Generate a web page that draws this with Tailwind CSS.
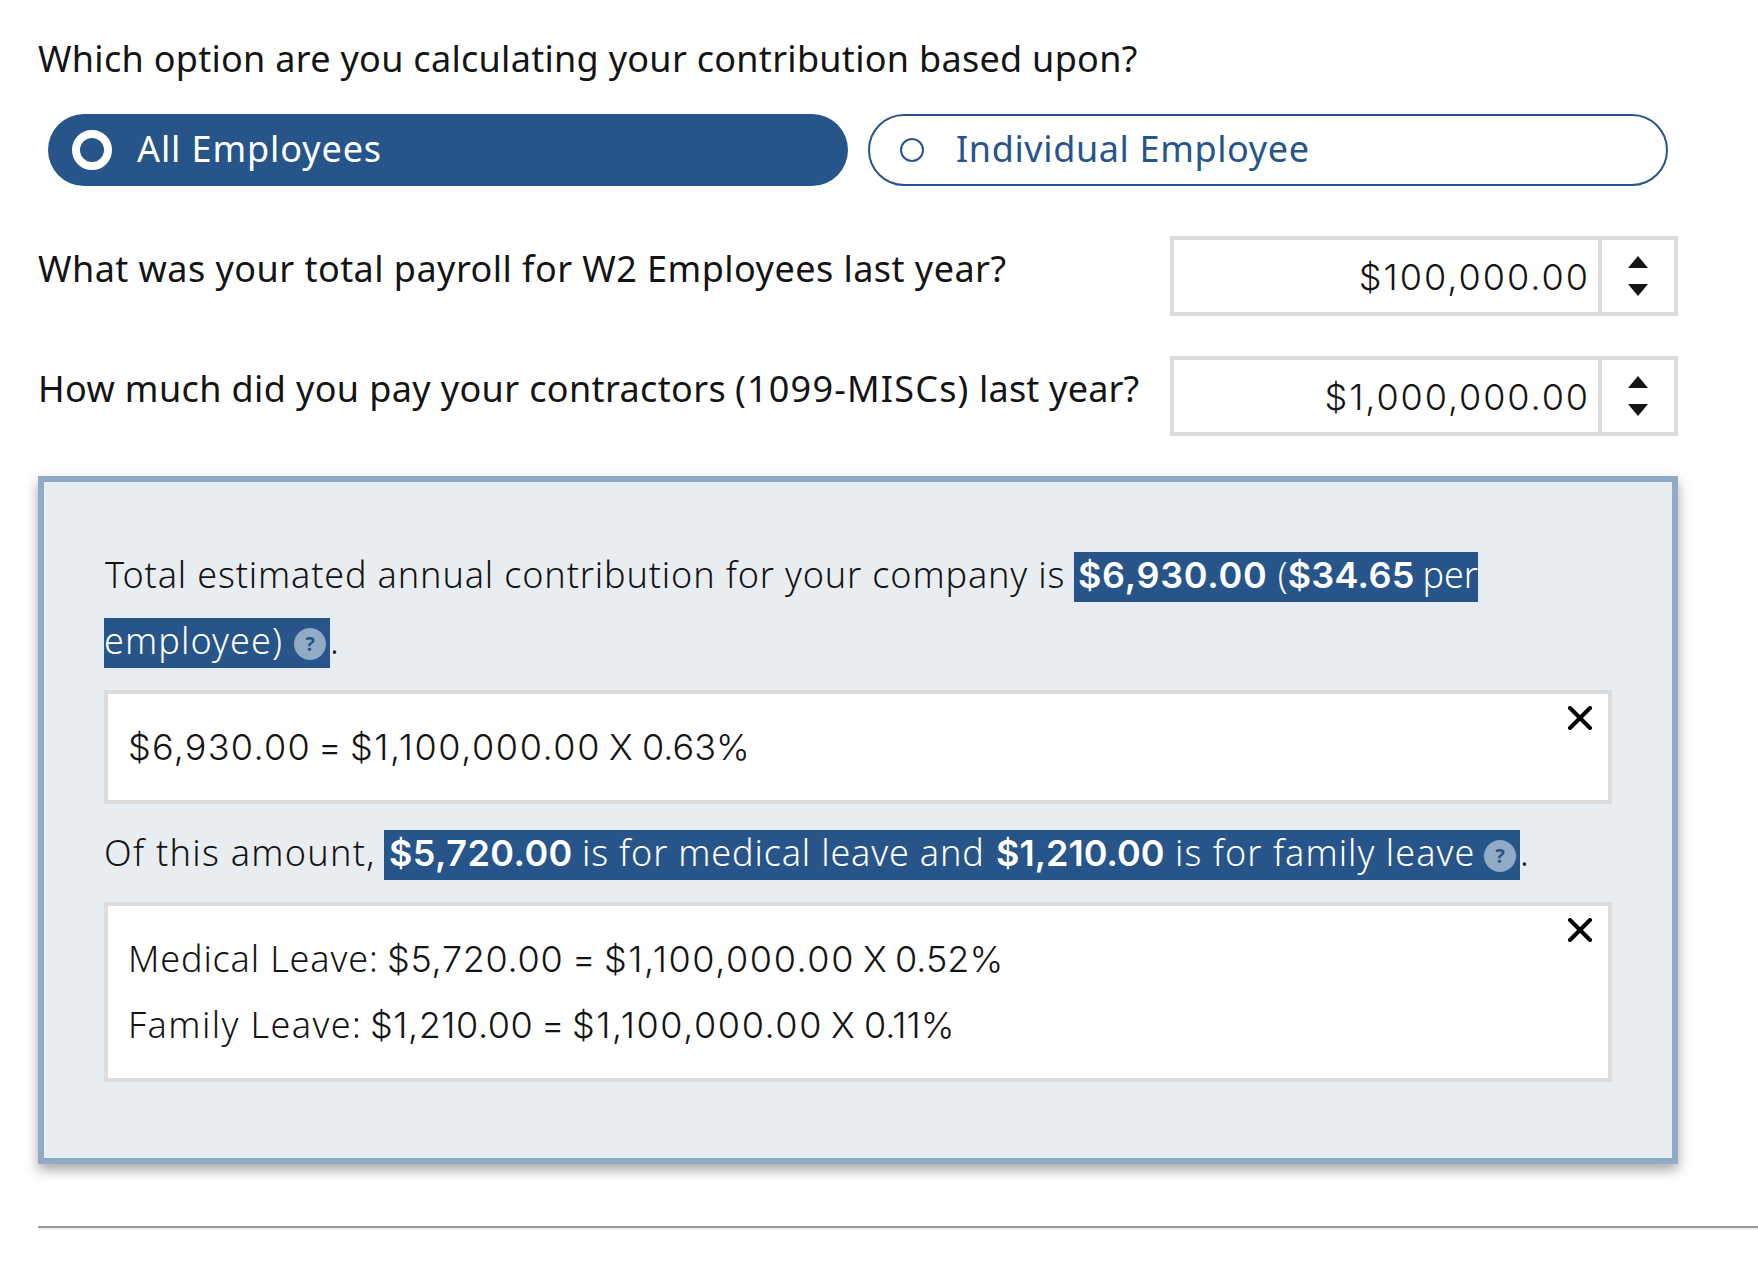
<!DOCTYPE html>
<html lang="en"><head><meta charset="utf-8"><title>Contribution calculator</title><script src="https://cdn.jsdelivr.net/npm/@tailwindcss/browser@4"></script></head>
<body class="bg-white text-[#141414] font-['Noto_Sans',sans-serif] text-[36px] leading-[46px] whitespace-nowrap overflow-hidden">
<main class="pl-[38px] pt-9">
<h1 class="h-[78px] font-normal tracking-[0.29px]">Which option are you calculating your contribution based upon?</h1>
<div class="flex gap-5 pl-[10px]">
<label class="flex w-[800px] h-[72px] items-start rounded-full bg-[#27558A] text-white pl-6 pt-3"><span class="size-10 mt-1 rounded-full border-8 border-white"></span><span class="ml-[25px] tracking-[0.9px]">All Employees</span></label>
<label class="flex w-[800px] h-[72px] items-start rounded-full border-2 border-[#27558A] text-[#27558A] pl-[30px] pt-[10px]"><span class="size-6 mt-3 rounded-full border-2 border-[#27558A]"></span><span class="ml-8 tracking-[0.62px]">Individual Employee</span></label>
</div>
<div class="mt-[50px] flex w-[1640px] justify-between h-20"><div class="pt-[10px] tracking-[0.46px]">What was your total payroll for W2 Employees last year?</div>
<div class="flex w-[508px] border-4 border-[#DCDCDC]"><div class="flex-1 border-r-4 border-[#DCDCDC] pr-2 pt-[14px] text-right font-['Inter'] font-light tracking-[2px]">$100,000.00</div>
<div class="flex w-[72px] flex-col items-center gap-4 pt-4"><svg width="20" height="12" fill="#141414"><path d="M10 0 20 12H0z"/></svg><svg width="20" height="12" fill="#141414"><path d="M0 0H20L10 12z"/></svg></div></div></div>
<div class="mt-10 flex w-[1640px] justify-between h-20"><div class="pt-[10px] flex"><span class="w-[697px] tracking-[0.37px]">How much did you pay your contractors</span><span class="w-[244px] tracking-[1.2px]">(1099-MISCs)</span><span class="tracking-[0.2px]">last year?</span></div>
<div class="flex w-[508px] border-4 border-[#DCDCDC]"><div class="flex-1 border-r-4 border-[#DCDCDC] pr-2 pt-[14px] text-right font-['Inter'] font-light tracking-[1.9px]">$1,000,000.00</div>
<div class="flex w-[72px] flex-col items-center gap-4 pt-4"><svg width="20" height="12" fill="#141414"><path d="M10 0 20 12H0z"/></svg><svg width="20" height="12" fill="#141414"><path d="M0 0H20L10 12z"/></svg></div></div></div>
<section class="mt-10 w-[1640px] h-[688px] border-6 border-[#91AAC6] bg-[#E8EDF1] px-[60px] pt-[70px] shadow-[0_6px_12px_rgba(0,0,0,0.35)] font-light">
<div class="flex h-[50px]"><span class="w-[970px] pl-px tracking-[0.85px]">Total estimated annual contribution for your company is</span>
<div class="flex items-baseline w-[404px] bg-[#27558A] text-white"><span class="ml-1 font-['Inter'] font-semibold w-[200px] tracking-[0.7px]">$6,930.00</span><span class="w-[10px]">(</span><span class="font-['Inter'] font-semibold w-[135px] tracking-[0.3px]">$34.65</span><span>per</span></div></div>
<div class="mt-4 flex h-[50px]"><div class="flex w-[226px] bg-[#27558A] text-white"><span class="w-[190px] tracking-[1.1px]">employee)</span><span class="mt-[10px] flex size-8 items-center justify-center rounded-full bg-[#91AAC6] text-[#27558A] text-[20px] font-bold leading-none">?</span></div><span>.</span></div>
<div class="mt-[22px] flex h-[114px] justify-between border-4 border-[#DCDCDC] bg-white pl-[20px] pr-[12px]"><div class="flex pt-[30px] font-['Inter']"><span class="w-[190px] tracking-[1.25px]">$6,930.00</span><span class="w-[32px]">=</span><span class="w-[259px] tracking-[1.58px]">$1,100,000.00</span><span class="w-[33px]">X</span><span>0.63%</span></div>
<svg class="mt-3" width="32" height="24" viewBox="-4 0 32 24" fill="none" stroke="#000" stroke-width="4" stroke-linecap="round"><path d="M2 2 22 22M22 2 2 22"/></svg></div>
<div class="mt-[26px] flex h-[50px]"><span class="w-[280px] tracking-[1.28px]">Of this amount,</span>
<div class="flex items-baseline w-[1136px] bg-[#27558A] text-white"><span class="ml-[5px] font-['Inter'] font-semibold w-[193px] tracking-[0.45px]">$5,720.00</span><span class="w-[414px] tracking-[0.83px]">is for medical leave and</span><span class="font-['Inter'] font-semibold w-[179px]">$1,210.00</span><span class="w-[309px] tracking-[1.05px]">is for family leave</span><span class="mt-[10px] self-start flex size-8 items-center justify-center rounded-full bg-[#91AAC6] text-[#27558A] text-[20px] font-bold leading-none">?</span></div><span>.</span></div>
<div class="mt-[22px] flex h-[180px] justify-between border-4 border-[#DCDCDC] bg-white pl-[20px] pr-[12px]"><div class="pt-[30px]"><div class="flex items-baseline h-[66px] font-['Inter']"><span class="font-['Noto_Sans'] w-[259px] tracking-[0.85px]">Medical Leave:</span><span class="w-[185px] tracking-[0.7px]">$5,720.00</span><span class="w-[32px]">=</span><span class="w-[259px] tracking-[1.58px]">$1,100,000.00</span><span class="w-[32px]">X</span><span>0.52%</span></div>
<div class="flex items-baseline font-['Inter']"><span class="font-['Noto_Sans'] w-[242px] tracking-[1.4px]">Family Leave:</span><span class="w-[171px] tracking-[0.55px]">$1,210.00</span><span class="w-[31px]">=</span><span class="w-[259px] tracking-[1.58px]">$1,100,000.00</span><span class="w-[33px]">X</span><span>0.11%</span></div></div>
<svg class="mt-3" width="32" height="24" viewBox="-4 0 32 24" fill="none" stroke="#000" stroke-width="4" stroke-linecap="round"><path d="M2 2 22 22M22 2 2 22"/></svg></div>
</section>
<hr class="mt-[62px] border-0 border-t-2 border-[#999999] h-1 bg-[#EEEEEE]">
</main>
</body></html>
